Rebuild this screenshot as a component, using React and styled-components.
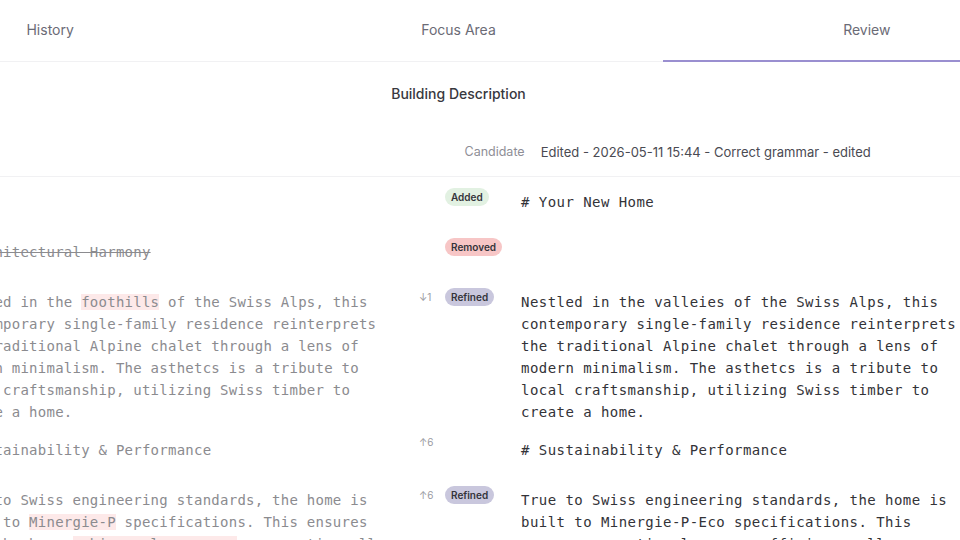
import styled, { createGlobalStyle } from "styled-components";

const GlobalStyle = createGlobalStyle`
    body {
        margin: 0;
        background: #ffffff;
        overflow: hidden;
        font-family: 'Inter', 'Noto Sans', sans-serif;
    }
`

const Page = styled.div`
    width: 1225px;
    margin-left: -154px;
`

const TabBar = styled.div`
    display: grid;
    grid-template-columns: repeat(3, 1fr);
    box-shadow: inset 0 -1px 0 #f1f1f3;
`

const Tab = styled.div`
    height: 58px;
    padding-bottom: 2px;
    display: flex;
    align-items: center;
    justify-content: center;
    font-size: 14px;
    color: #6b6b76;
    border-bottom: 2px solid ${(p) => (p.$active ? "#9a8fd0" : "transparent")};
`

const Title = styled.h2`
    margin: 0;
    padding-top: 22px;
    text-align: center;
    font-size: 14px;
    line-height: 20px;
    font-weight: 500;
    color: #38383e;
`

const VersionHeader = styled.div`
    display: grid;
    grid-template-columns: 1fr 1fr;
    margin-top: 24px;
    padding: 16px 0;
    border-bottom: 1px solid #f1f1f3;
`

const VersionCell = styled.div`
    display: flex;
    align-items: center;
    gap: 16px;
    height: 16px;
    padding-left: 6px;
`

const VersionLabel = styled.span`
    font-size: 12.5px;
    line-height: 18px;
    color: #8e8e96;
`

const VersionInfo = styled.span`
    font-size: 13px;
    line-height: 16px;
    color: #4a4a52;
`

const DiffBody = styled.div`
    padding-top: 6px;
`

const DiffRow = styled.div`
    display: grid;
    grid-template-columns: 449px 121px 450px;
    padding: 8px 100px 8px 105px;
    min-height: 50px;
    box-sizing: border-box;
`

const Code = styled.div`
    font-family: 'DejaVu Sans Mono', 'Liberation Mono', monospace;
    font-size: 14px;
    letter-spacing: ${(p) => (p.$side === "old" ? "0.25px" : "0.45px")};
    line-height: 22px;
    color: ${(p) => (p.$side === "old" ? "#8b8b8f" : "#333338")};
    text-decoration: ${(p) => (p.$struck ? "line-through" : "none")};
    white-space: pre-wrap;
`

const Mark = styled.span`
    background: #fde9e9;
`

const Gutter = styled.div`
    display: flex;
    align-items: center;
    align-self: start;
    margin-top: -3px;
    padding-left: 19px;
`

const Shift = styled.span`
    width: 26px;
    font-size: 10px;
    color: #9a9aa2;
`

const Badge = styled.span`
    height: 18px;
    padding: 0 6px;
    border-radius: 9px;
    display: inline-flex;
    align-items: center;
    font-size: 10px;
    font-weight: 600;
    color: #34343a;
    background: ${(p) => p.$bg};
`

const badgeColors = {
    Added: "#e2f1e2",
    Removed: "#f7c6c6",
    Refined: "#c9c7dd",
};

const rows = [
    {
        old: null,
        badge: "Added",
        next: "# Your New Home",
    },
    {
        old: "# Architectural Harmony",
        struck: true,
        badge: "Removed",
        next: null,
    },
    {
        old: (
            <>
                Nestled in the <Mark>foothills</Mark> of the Swiss Alps, this contemporary single-family residence reinterprets the traditional Alpine chalet through a lens of modern minimalism. The asthetcs is a tribute to local craftsmanship, utilizing Swiss timber to create a home.
            </>
        ),
        shift: "↓1",
        badge: "Refined",
        next: "Nestled in the valleies of the Swiss Alps, this contemporary single-family residence reinterprets the traditional Alpine chalet through a lens of modern minimalism. The asthetcs is a tribute to local craftsmanship, utilizing Swiss timber to create a home.",
    },
    {
        old: "# Sustainability & Performance",
        shift: "↑6",
        next: "# Sustainability & Performance",
    },
    {
        old: (
            <>
                True to Swiss engineering standards, the home is built to <Mark>Minergie-P</Mark> specifications. This ensures that the home <Mark>achieves low energy</Mark> consumption all year round.
            </>
        ),
        shift: "↑6",
        badge: "Refined",
        next: "True to Swiss engineering standards, the home is built to Minergie-P-Eco specifications. This ensures exceptional energy efficiency all year round.",
    },
];

export default function App() {
    return (
        <Page>
            <GlobalStyle />
            <TabBar>
                <Tab>History</Tab>
                <Tab>Focus Area</Tab>
                <Tab $active>Review</Tab>
            </TabBar>

            <Title>Building Description</Title>

            <VersionHeader>
                <VersionCell>
                    <VersionLabel>Original</VersionLabel>
                </VersionCell>
                <VersionCell>
                    <VersionLabel>Candidate</VersionLabel>
                    <VersionInfo>Edited - 2026-05-11 15:44 - Correct grammar - edited</VersionInfo>
                </VersionCell>
            </VersionHeader>

            <DiffBody>
                {rows.map((r, i) => (
                    <DiffRow key={i}>
                        <Code $side="old" $struck={r.struck}>{r.old}</Code>
                        <Gutter>
                            <Shift>{r.shift}</Shift>
                            {r.badge && <Badge $bg={badgeColors[r.badge]}>{r.badge}</Badge>}
                        </Gutter>
                        <Code $side="new">{r.next}</Code>
                    </DiffRow>
                ))}
            </DiffBody>
        </Page>
    )
}
